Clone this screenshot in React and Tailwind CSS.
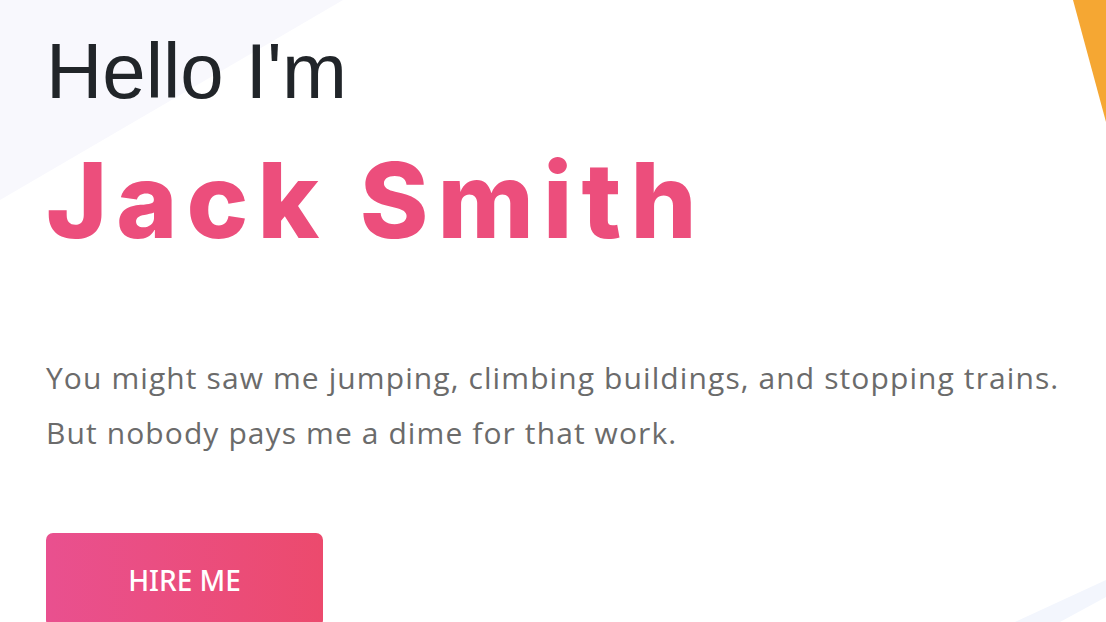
export default function App() {
  return (
    <div className="relative w-[1106px] h-[622px] overflow-hidden bg-white">
      <svg className="absolute inset-0 pointer-events-none" width="1106" height="622" viewBox="0 0 1106 622">
        <polygon points="0,0 343,0 0,200" fill="#f8f8fd" />
        <polygon points="1073,0 1106,0 1106,122" fill="#f5a733" />
        <polygon points="1015,622 1106,580 1106,597 1060,622" fill="#f3f6fd" />
      </svg>
      <div className="relative flex flex-col pl-[46px] pt-[26px]">
        <h1 className="text-[78px] leading-[90px] text-[#212529] font-['Liberation_Sans',Arial,sans-serif] font-normal">
          Hello I'm
        </h1>
        <h2 className="mt-[24px] text-[104px] leading-[120px] text-[#ec4e7c] font-['Inter',sans-serif] font-extrabold tracking-[9px]">
          Jack Smith
        </h2>
        <p className="mt-[90px] text-[30px] leading-[55px] tracking-[1.1px] text-[#6b6b6b] font-['Open_Sans',sans-serif]">
          You might saw me jumping, climbing buildings, and stopping trains.
          <br />
          But nobody pays me a dime for that work.
        </p>
        <div className="mt-[73px]">
          <button className="w-[277px] h-[94px] rounded-[7px] bg-gradient-to-r from-[#e9508f] to-[#ec4a6d] text-white text-[28px] font-['Noto_Sans',sans-serif] font-medium">
            HIRE ME
          </button>
        </div>
      </div>
    </div>
  );
}
